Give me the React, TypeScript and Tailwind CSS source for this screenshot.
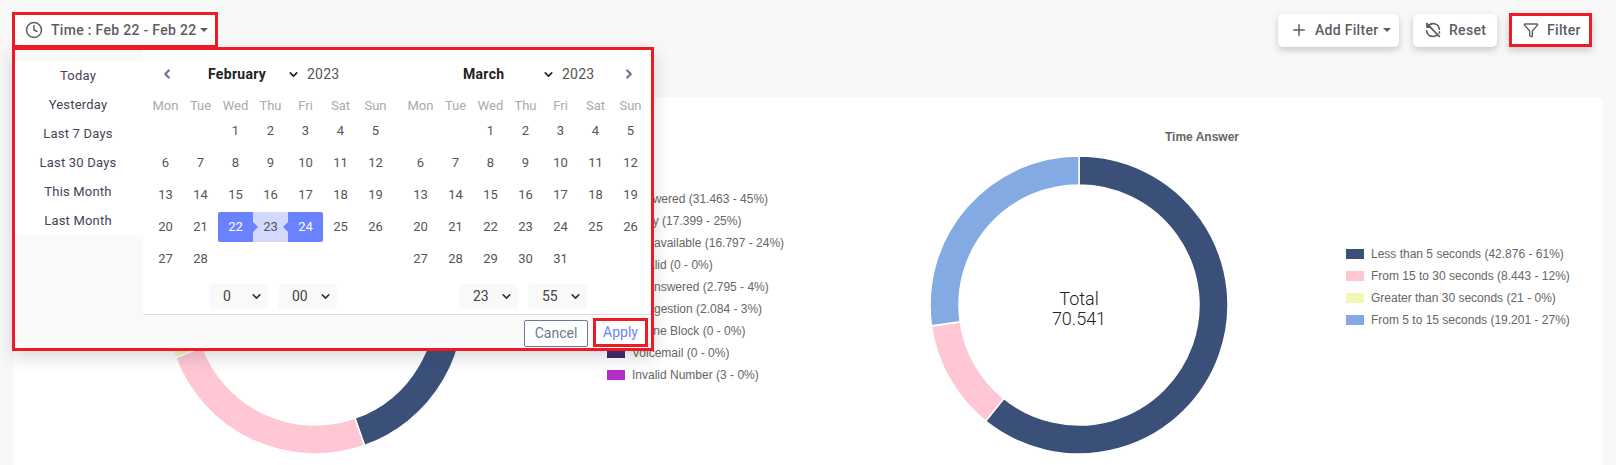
import { ChevronDown, ChevronLeft, ChevronRight, Clock, Filter, Plus } from "lucide-react";

const WEEK_DAYS = ["Mon", "Tue", "Wed", "Thu", "Fri", "Sat", "Sun"];
const SHORTCUTS = ["Today", "Yesterday", "Last 7 Days", "Last 30 Days", "This Month", "Last Month"];

interface Slice {
  label: string;
  value: number;
  percent: number;
  color: string;
}

const CALL_STATUS: Slice[] = [
  { label: "Answered", value: 31463, percent: 45, color: "#3a5079" },
  { label: "Busy", value: 17399, percent: 25, color: "#ffc6d4" },
  { label: "Not available", value: 16797, percent: 24, color: "#f1f7b5" },
  { label: "Invalid", value: 0, percent: 0, color: "#84aae3" },
  { label: "Unanswered", value: 2795, percent: 4, color: "#4e9a8f" },
  { label: "Congestion", value: 2084, percent: 3, color: "#e08a4a" },
  { label: "Online Block", value: 0, percent: 0, color: "#7a7a7a" },
  { label: "Voicemail", value: 0, percent: 0, color: "#41236b" },
  { label: "Invalid Number", value: 3, percent: 0, color: "#b32ec4" },
];

const TIME_ANSWER: Slice[] = [
  { label: "Less than 5 seconds", value: 42876, percent: 61, color: "#3a5079" },
  { label: "From 15 to 30 seconds", value: 8443, percent: 12, color: "#ffc6d4" },
  { label: "Greater than 30 seconds", value: 21, percent: 0, color: "#f1f7b5" },
  { label: "From 5 to 15 seconds", value: 19201, percent: 27, color: "#84aae3" },
];

const formatValue = (value: number) => value.toString().replace(/\B(?=(\d{3})+$)/g, ".");

const polar = (radius: number, degrees: number) => {
  const rad = (degrees * Math.PI) / 180;
  return `${(149 + radius * Math.sin(rad)).toFixed(2)} ${(149 - radius * Math.cos(rad)).toFixed(2)}`;
};

const Donut = ({ slices, total }: { slices: Slice[]; total?: number }) => {
  const sum = slices.reduce((acc, s) => acc + s.value, 0);
  let angle = 0;
  return (
    <div className="relative h-[298px] w-[298px] shrink-0">
      <svg width="298" height="298" viewBox="0 0 298 298">
        {slices.map((slice) => {
          const start = angle;
          const sweep = (slice.value / sum) * 360;
          angle += sweep;
          if (sweep === 0) return null;
          const large = sweep > 180 ? 1 : 0;
          const d = `M ${polar(149, start)} A 149 149 0 ${large} 1 ${polar(149, angle)} L ${polar(120, angle)} A 120 120 0 ${large} 0 ${polar(120, start)} Z`;
          return <path key={slice.label} d={d} fill={slice.color} stroke="#ffffff" strokeWidth="1.5" />;
        })}
      </svg>
      {total !== undefined && (
        <div className="absolute inset-0 flex flex-col items-center justify-center pt-[8px] font-['Roboto'] text-[18px] leading-[20px] font-light text-[#222222]">
          <span>Total</span>
          <span>{formatValue(total)}</span>
        </div>
      )}
    </div>
  );
};

const Legend = ({ slices, className }: { slices: Slice[]; className: string }) => (
  <div className={`mb-[36px] flex flex-col font-['Liberation_Sans'] text-[12px] text-[#666666] ${className}`}>
    {slices.map((slice) => (
      <div key={slice.label} className="flex h-[22px] items-center whitespace-nowrap">
        <span className="mr-[7px] h-[10px] w-[18px]" style={{ backgroundColor: slice.color }} />
        {slice.label} ({formatValue(slice.value)} - {slice.percent}%)
      </div>
    ))}
  </div>
);

const ChartPanel = ({ title, slices, total, donutClass, legendClass }: { title: string; slices: Slice[]; total?: number; donutClass: string; legendClass: string }) => (
  <div className="flex w-1/2 flex-col pt-[33px]">
    <h3 className="pr-[7px] text-center font-['Liberation_Sans'] text-[12px] leading-[14px] font-bold text-[#666666]">{title}</h3>
    <div className={`mt-[12px] flex items-center ${donutClass}`}>
      <Donut slices={slices} total={total} />
      <Legend slices={slices} className={legendClass} />
    </div>
  </div>
);

const TimeSelect = ({ value }: { value: string }) => (
  <div className="flex h-[25px] w-[59px] items-center justify-between rounded-[4px] bg-[#f9f9f9] pr-[5px] pl-[14px] text-[14px] text-[#444444]">
    <span className="w-[8px] text-center">{value}</span>
    <ChevronDown size={13} strokeWidth={3} className="text-[#333333]" />
  </div>
);

const Month = ({ name, blanks, days, selected, left, right, time, timeClass }: { name: string; blanks: number; days: number; selected: boolean; left?: boolean; right?: boolean; time: [string, string]; timeClass: string }) => {
  const cells = Array.from({ length: days }, (_, i) => i + 1);
  return (
    <div className="w-[245px]">
      <div className="mb-[5px] flex h-[32px] items-center">
        <div className="flex w-[38px] justify-center text-[#6b7a90]">{left && <ChevronLeft size={14} strokeWidth={4} />}</div>
        <div className="ml-[22px] flex w-[92px] items-center justify-between text-[14px] font-bold tracking-[0.3px] text-[#222222]">
          {name}
          <ChevronDown size={13} strokeWidth={3} />
        </div>
        <span className="ml-[7px] text-[14px] tracking-[0.2px] text-[#555555]">2023</span>
        <div className="ml-auto flex w-[38px] justify-center text-[#6b7a90]">{right && <ChevronRight size={14} strokeWidth={4} />}</div>
      </div>
      <div className="grid h-[21px] grid-cols-7 items-center text-center text-[13px] text-[#aaaaaa]">
        {WEEK_DAYS.map((day) => (
          <span key={day}>{day}</span>
        ))}
      </div>
      <div className="grid grid-cols-7 gap-y-[2px] text-center text-[13px] text-[#555555]">
        {Array.from({ length: blanks }, (_, i) => (
          <span key={i} />
        ))}
        {cells.map((day) => {
          if (selected && day === 22) {
            return (
              <span key={day} className="relative flex h-[30px] items-center justify-center rounded-l-[2px] bg-[#6b82fe] text-white">
                {day}
                <i className="absolute top-[10px] left-full z-10 border-y-[5px] border-l-[5px] border-y-transparent border-l-[#6b82fe]" />
              </span>
            );
          }
          if (selected && day === 23) {
            return (
              <span key={day} className="flex h-[30px] items-center justify-center bg-[#d3d9fd]">
                {day}
              </span>
            );
          }
          if (selected && day === 24) {
            return (
              <span key={day} className="relative flex h-[30px] items-center justify-center rounded-r-[2px] bg-[#6b82fe] text-white">
                {day}
                <i className="absolute top-[10px] right-full z-10 border-y-[5px] border-r-[5px] border-y-transparent border-r-[#6b82fe]" />
              </span>
            );
          }
          return (
            <span key={day} className="flex h-[30px] items-center justify-center">
              {day}
            </span>
          );
        })}
      </div>
      <div className={`flex h-[25px] gap-[10px] ${timeClass}`}>
        <TimeSelect value={time[0]} />
        <TimeSelect value={time[1]} />
      </div>
    </div>
  );
};

const Caret = () => <span className="ml-[4px] border-x-[4px] border-t-[4px] border-x-transparent border-t-[#5c5c66]" />;

// refresh arrows crossed by a slash, no package icon has this shape
const ResetIcon = () => (
  <svg width="18" height="18" viewBox="0 0 24 24" fill="none" stroke="currentColor" strokeWidth="2.2" strokeLinecap="round" strokeLinejoin="round" className="mr-[7px]">
    <path d="M20.5 11a8.5 8.5 0 0 0-15.7-3.4" />
    <path d="M4 3.5v4.6h4.6" />
    <path d="M3.5 13a8.5 8.5 0 0 0 14.6 5" />
    <path d="M20.5 16v-1.5" />
    <path d="M3.5 3.5l17 17" />
  </svg>
);

const ActionButton = ({ children, className }: { children: React.ReactNode; className: string }) => (
  <button className={`flex items-center bg-white text-[14px] font-medium tracking-[0.3px] text-[#5c5c66] shadow-[0_3px_7px_rgba(70,70,100,0.28)] ${className}`}>{children}</button>
);

export default function App() {
  return (
    <div className="h-[465px] overflow-hidden bg-[#f8f8f9] font-['Roboto',sans-serif]">
      <div className="flex items-center justify-between pt-[12px] pr-[24px] pl-[12px]">
        <div className="relative">
          <button className="flex h-[36px] w-[206px] items-center border-[3px] border-[#ed1c24] bg-white pl-[10px] text-[14px] font-medium tracking-[0.3px] text-[#5c5c66]">
            <Clock size={18} strokeWidth={2} className="mr-[8px]" />
            Time : Feb 22 - Feb 22
            <Caret />
          </button>
          <div className="absolute top-[35px] left-0 z-20 flex h-[304px] w-[642px] border-[3px] border-[#ed1c24] bg-white shadow-[0_6px_16px_rgba(60,60,80,0.2)]">
            <div className="w-[128px] bg-[#f9f9f9] pt-[11px]">
              <div className="bg-white pr-[2px]">
                {SHORTCUTS.map((label) => (
                  <div key={label} className="flex h-[29px] items-center justify-center text-[13px] tracking-[0.2px] text-[#444455]">
                    {label}
                  </div>
                ))}
              </div>
            </div>
            <div className="flex flex-1 flex-col">
              <div className="flex h-[264px] gap-[10px] pt-[8px] pl-[5px]">
                <Month name="February" blanks={2} days={28} selected left time={["0", "00"]} timeClass="mt-[10px] ml-[61px]" />
                <Month name="March" blanks={2} days={31} selected={false} right time={["23", "55"]} timeClass="mt-[10px] ml-[56px]" />
              </div>
              <div className="flex flex-1 items-end justify-end gap-[5px] border-t border-[#dddddd] bg-[#f9f9f9] pr-[3px] pb-[1px] text-[14px]">
                <button className="h-[27px] w-[64px] rounded-[2px] border border-[#6b7a90] bg-white text-[#6b7a90]">Cancel</button>
                <button className="h-[29px] w-[55px] border-[3px] border-[#ed1c24] bg-white text-[#6b82fe]">Apply</button>
              </div>
            </div>
          </div>
        </div>
        <div className="flex items-center">
          <ActionButton className="h-[33px] w-[121px] rounded-[5px] pl-[12px]">
            <Plus size={18} strokeWidth={2} className="mr-[7px]" />
            Add Filter
            <Caret />
          </ActionButton>
          <ActionButton className="ml-[14px] h-[33px] w-[84px] rounded-[5px] pl-[11px]">
            <ResetIcon />
            Reset
          </ActionButton>
          <ActionButton className="ml-[12px] h-[34px] w-[83px] border-[3px] border-[#ed1c24] pl-[11px]">
            <Filter size={16} strokeWidth={2} className="mr-[8px]" />
            Filter
          </ActionButton>
        </div>
      </div>
      <div className="mx-[13px] mt-[49px] flex h-[420px] rounded-[6px] bg-white">
        <ChartPanel title="Call Status" slices={CALL_STATUS} donutClass="pl-[153px]" legendClass="ml-[143px]" />
        <ChartPanel title="Time Answer" slices={TIME_ANSWER} total={70541} donutClass="pl-[122px]" legendClass="ml-[118px]" />
      </div>
    </div>
  );
}
